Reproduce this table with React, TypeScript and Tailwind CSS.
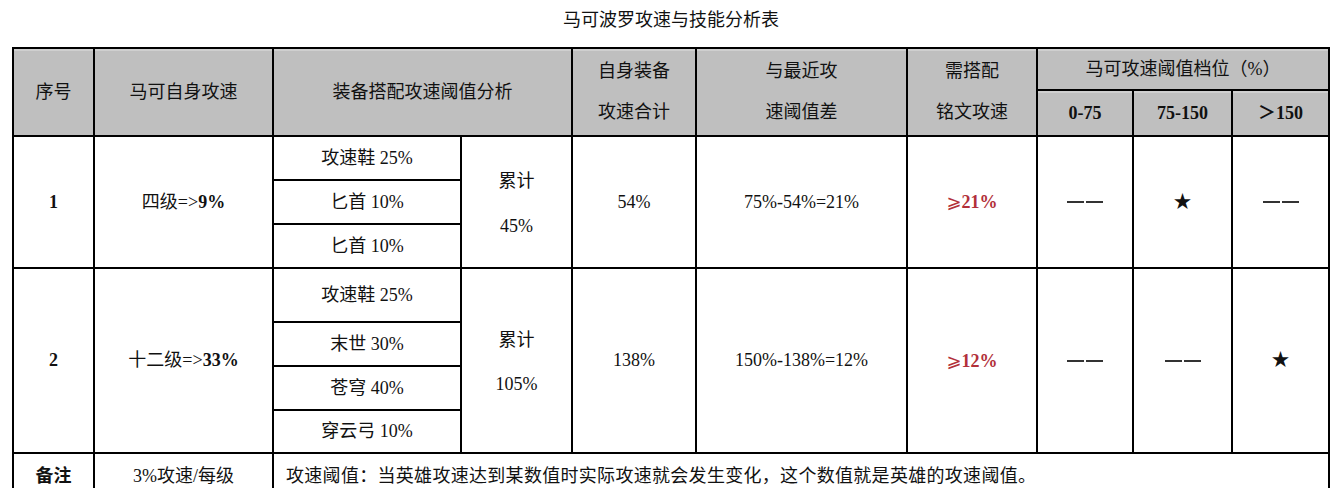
import type { ReactNode } from "react";

const font = "font-['Liberation_Serif','Noto_Sans_CJK_SC',serif]";

function Cell({ className, children }: { className: string; children: ReactNode }) {
  return (
    <div className={`flex items-center justify-center text-center text-[18px] text-[#111] ${className}`}>
      {children}
    </div>
  );
}

function Head({ className, children }: { className: string; children: ReactNode }) {
  return (
    <Cell className={`bg-[#bfbfbf] shadow-[inset_0_2px_0_#cfcfcf] ${className}`}>{children}</Cell>
  );
}

function Body({ className, children }: { className: string; children: ReactNode }) {
  return <Cell className={`bg-white ${className}`}>{children}</Cell>;
}

function Ge({ children }: { children: ReactNode }) {
  return (
    <span className="font-bold text-[#b2303a]">
      <span className="font-['DejaVu_Sans','Noto_Sans_CJK_SC',sans-serif] font-normal">⩾</span>
      {children}
    </span>
  );
}

function Dash() {
  return (
    <span className="flex gap-[2px]">
      <span className="block h-[2px] w-[17px] bg-[#333]" />
      <span className="block h-[2px] w-[17px] bg-[#333]" />
    </span>
  );
}

export default function App() {
  return (
    <div className={`min-h-[488px] bg-white ${font}`}>
      {/* Title */}
      <div className="h-[47px] pt-[8px] text-center text-[18px] leading-[24px] text-[#111]">
        马可波罗攻速与技能分析表
      </div>

      <div className="ml-[12px] grid w-fit grid-cols-[79px_177px_186px_109px_122px_209px_128px_94px_97px_95px] grid-rows-[40px_44px_42px_42px_42px_52px_42px_42px_41px_44px] gap-[2px] bg-black p-[2px]">
        {/* Header */}
        <Head className="col-start-1 row-start-1 row-span-2">序号</Head>
        <Head className="col-start-2 row-start-1 row-span-2">马可自身攻速</Head>
        <Head className="col-start-3 col-span-2 row-start-1 row-span-2">装备搭配攻速阈值分析</Head>
        <Head className="col-start-5 row-start-1 row-span-2 flex-col leading-[41px]">
          <span>自身装备</span>
          <span>攻速合计</span>
        </Head>
        <Head className="col-start-6 row-start-1 row-span-2 flex-col leading-[41px]">
          <span>与最近攻</span>
          <span>速阈值差</span>
        </Head>
        <Head className="col-start-7 row-start-1 row-span-2 flex-col leading-[41px]">
          <span>需搭配</span>
          <span>铭文攻速</span>
        </Head>
        <Head className="col-start-8 col-span-3 row-start-1">马可攻速阈值档位（%）</Head>
        <Head className="col-start-8 row-start-2 font-bold">0-75</Head>
        <Head className="col-start-9 row-start-2 font-bold">75-150</Head>
        <Head className="col-start-10 row-start-2 font-bold">＞150</Head>

        {/* Row 1 */}
        <Body className="col-start-1 row-start-3 row-span-3 font-bold">1</Body>
        <Body className="col-start-2 row-start-3 row-span-3">
          四级=&gt;<b>9%</b>
        </Body>
        <Body className="col-start-3 row-start-3">攻速鞋 25%</Body>
        <Body className="col-start-3 row-start-4">匕首 10%</Body>
        <Body className="col-start-3 row-start-5">匕首 10%</Body>
        <Body className="col-start-4 row-start-3 row-span-3 flex-col pt-[4px] leading-[45px]">
          <span>累计</span>
          <span>45%</span>
        </Body>
        <Body className="col-start-5 row-start-3 row-span-3">54%</Body>
        <Body className="col-start-6 row-start-3 row-span-3">75%-54%=21%</Body>
        <Body className="col-start-7 row-start-3 row-span-3">
          <Ge>21%</Ge>
        </Body>
        <Body className="col-start-8 row-start-3 row-span-3">
          <Dash />
        </Body>
        <Body className="col-start-9 row-start-3 row-span-3">★</Body>
        <Body className="col-start-10 row-start-3 row-span-3">
          <Dash />
        </Body>

        {/* Row 2 */}
        <Body className="col-start-1 row-start-6 row-span-4 font-bold">2</Body>
        <Body className="col-start-2 row-start-6 row-span-4">
          十二级=&gt;<b>33%</b>
        </Body>
        <Body className="col-start-3 row-start-6">攻速鞋 25%</Body>
        <Body className="col-start-3 row-start-7">末世 30%</Body>
        <Body className="col-start-3 row-start-8">苍穹 40%</Body>
        <Body className="col-start-3 row-start-9">穿云弓 10%</Body>
        <Body className="col-start-4 row-start-6 row-span-4 flex-col pt-[3px] leading-[44px]">
          <span>累计</span>
          <span>105%</span>
        </Body>
        <Body className="col-start-5 row-start-6 row-span-4">138%</Body>
        <Body className="col-start-6 row-start-6 row-span-4">150%-138%=12%</Body>
        <Body className="col-start-7 row-start-6 row-span-4">
          <Ge>12%</Ge>
        </Body>
        <Body className="col-start-8 row-start-6 row-span-4">
          <Dash />
        </Body>
        <Body className="col-start-9 row-start-6 row-span-4">
          <Dash />
        </Body>
        <Body className="col-start-10 row-start-6 row-span-4">★</Body>

        {/* Remarks */}
        <Body className="col-start-1 row-start-10 font-bold">备注</Body>
        <Body className="col-start-2 row-start-10">3%攻速/每级</Body>
        <Body className="col-start-3 col-span-8 row-start-10 justify-start pl-[12px] tracking-[0.3px]">
          攻速阈值：当英雄攻速达到某数值时实际攻速就会发生变化，这个数值就是英雄的攻速阈值。
        </Body>
      </div>
    </div>
  );
}
